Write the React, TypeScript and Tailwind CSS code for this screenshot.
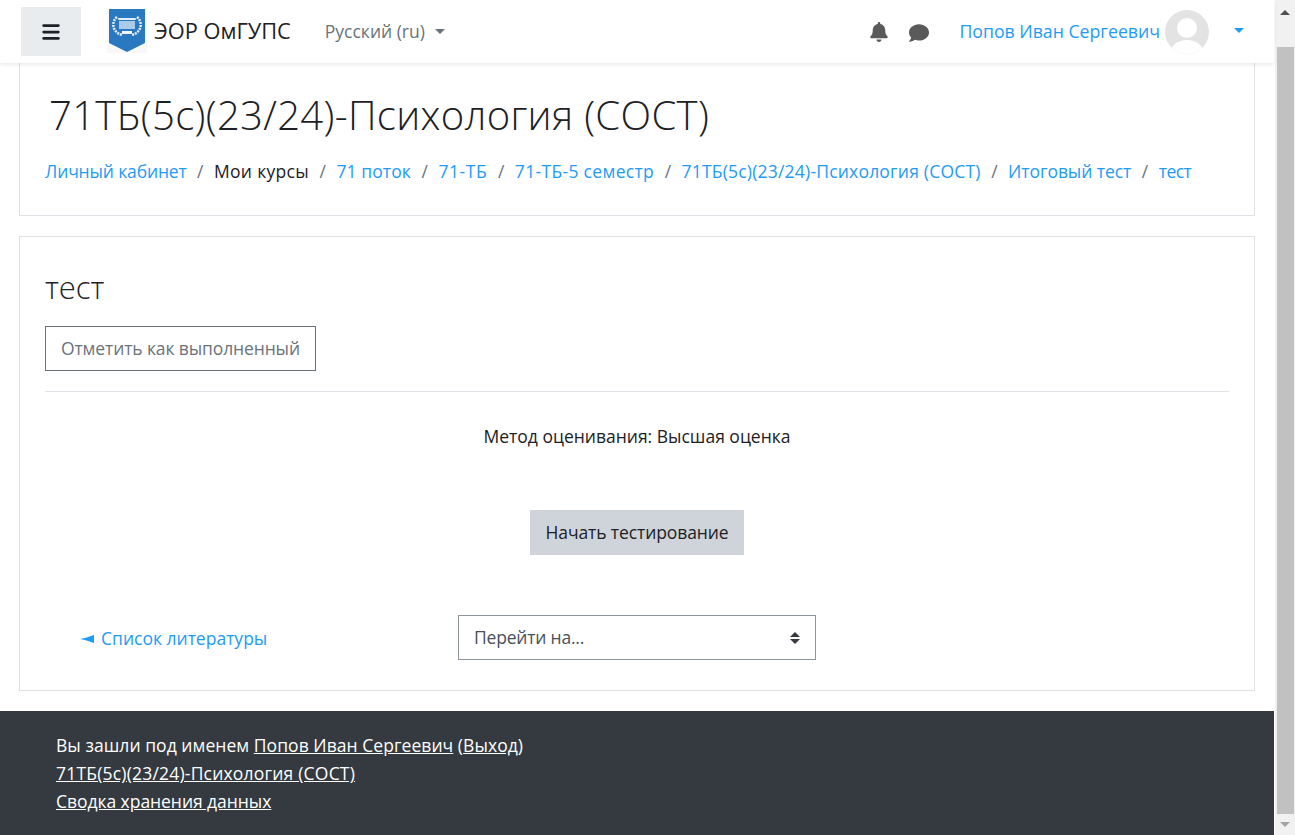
import { FaBell, FaComment } from "react-icons/fa"
import { Menu } from "lucide-react"

const font = "font-['Open_Sans','Noto_Sans',sans-serif]"

const crumbs = [
  { text: "Личный кабинет", link: true, cls: "tracking-[-0.15px]" },
  { text: "Мои курсы", link: false, cls: "tracking-[0.3px]" },
  { text: "71 поток", link: true, cls: "tracking-[0.1px]" },
  { text: "71-ТБ", link: true, cls: "tracking-[0.6px]" },
  { text: "71-ТБ-5 семестр", link: true, cls: "tracking-[0.33px]" },
  { text: "71ТБ(5с)(23/24)-Психология (СОСТ)", link: true, cls: "tracking-[0.2px]" },
  { text: "Итоговый тест", link: true, cls: "tracking-[-0.06px]" },
  { text: "тест", link: true, cls: "tracking-[-0.5px]" },
]

function Logo() {
  return (
    <svg width="40" height="44" viewBox="0 0 40 44" className="shrink-0 mb-[2px]">
      <rect width="40" height="44" fill="#f8f8f8" />
      <path d="M2 0H38V34L20 43L2 34Z" fill="#2a78bf" />
      <path d="M10 8C4 13 5 23 15 26" fill="none" stroke="#e4eef7" strokeWidth="2.5" strokeDasharray="2 1" />
      <path d="M30 8C36 13 35 23 25 26" fill="none" stroke="#e4eef7" strokeWidth="2.5" strokeDasharray="2 1" />
      <rect x="11" y="9" width="18" height="2" rx="1" fill="#e4eef7" />
      <rect x="12" y="12" width="16" height="8" fill="#a9cbe9" />
      <rect x="15" y="22" width="10" height="3" fill="#eef5fb" />
    </svg>
  )
}

function Avatar() {
  return (
    <svg width="44" height="44" viewBox="0 0 44 44" className="shrink-0">
      <defs>
        <clipPath id="av">
          <circle cx="22" cy="22" r="22" />
        </clipPath>
      </defs>
      <g clipPath="url(#av)">
        <rect width="44" height="44" fill="#e3e3e3" />
        <circle cx="22" cy="18" r="10" fill="#fff" />
        <ellipse cx="22" cy="44" rx="17" ry="14" fill="#fff" />
      </g>
    </svg>
  )
}

function Scrollbar() {
  return (
    <div className="w-5 shrink-0 h-[835px] bg-[#f1f1f1] flex flex-col items-center">
      <div className="h-[20px] w-full flex items-center justify-center pt-1">
        <div className="w-0 h-0 border-x-[5px] border-x-transparent border-b-[5px] border-b-[#505050]" />
      </div>
      <div className="mt-[27px] w-[17px] h-[767px] bg-[#c1c1c1]" />
      <div className="flex-1 w-full flex items-center justify-center">
        <div className="w-0 h-0 border-x-[5px] border-x-transparent border-t-[5px] border-t-[#a3a3a3]" />
      </div>
    </div>
  )
}

export default function App() {
  return (
    <div className={`flex h-[835px] overflow-hidden bg-white text-[#1d2125] text-[17.5px] ${font}`}>
      <div className="flex-1 min-w-0 flex flex-col mr-px">
        <header className="relative z-10 h-[63px] shrink-0 bg-white shadow-[0_2px_4px_rgba(0,0,0,0.08)] flex items-center pl-[21px]">
          <button className="w-[60px] h-[49px] bg-[#e9ecef] flex items-center justify-center">
            <Menu size={22} strokeWidth={3} color="#1d2125" />
          </button>
          <div className="ml-[26px] flex items-center">
            <Logo />
            <span className="ml-[7px] text-[21.8px] text-[#1d2125]">ЭОР ОмГУПС</span>
          </div>
          <div className="ml-[34px] flex items-center text-[#6a737b]">
            <span>Русский ‎(ru)‎</span>
            <div className="ml-[10px] w-0 h-0 border-x-[5px] border-x-transparent border-t-[5px] border-t-[#6a737b]" />
          </div>
          <div className="ml-auto flex items-center pr-[30px]">
            <FaBell size={20} color="#5a5a5a" />
            <FaComment size={20} color="#5a5a5a" className="ml-[20px] mt-[2px]" />
            <span className="ml-[30px] text-[#1e9bf5] text-[17.7px]">Попов Иван Сергеевич</span>
            <div className="ml-[5px]">
              <Avatar />
            </div>
            <div className="ml-[25px] mb-[3px] w-0 h-0 border-x-[5px] border-x-transparent border-t-[5px] border-t-[#1e9bf5]" />
          </div>
        </header>

        <main className="flex-1 px-[19px] flex flex-col">
          <section className="border border-t-0 border-[#dee2e6] h-[153px] px-[25px] flex flex-col">
            <h1 className="mt-[27px] ml-[4px] text-[40px] tracking-[0.33px] font-light leading-[50px]">71ТБ(5с)(23/24)-Психология (СОСТ)</h1>
            <nav className="mt-[18px] flex items-center">
              {crumbs.map((c, i) => (
                <span key={c.text} className="flex items-center">
                  {i > 0 && <span className="mx-[10.5px] text-[#6a737b]">/</span>}
                  <span className={`${c.cls} ${c.link ? "text-[#1e9bf5]" : "text-[#1d2125]"}`}>{c.text}</span>
                </span>
              ))}
            </nav>
          </section>

          <section className="mt-[20px] border border-[#dee2e6] h-[455px] px-[25px] flex flex-col">
            <h2 className="mt-[30px] text-[31px] font-light leading-[40px]">тест</h2>
            <button className="mt-[19px] self-start h-[45px] px-[15px] border border-[#6a737b] text-[#6a737b] tracking-[-0.12px]">Отметить как выполненный</button>
            <div className="mt-[20px] border-t border-[#dee2e6]" />
            <p className="mt-[32px] text-center leading-[24px]">Метод оценивания: Высшая оценка</p>
            <button className="mt-[62px] self-center h-[45px] w-[214px] bg-[#ced4da] tracking-[-0.1px]">Начать тестирование</button>
            <div className="mt-[60px] flex items-center">
              <span className="ml-[35px] w-[378px] flex items-center text-[#1e9bf5] mt-[2px]">
                <svg width="14" height="8" viewBox="0 0 14 8" className="shrink-0">
                  <path d="M0 4L5 3L14 0V8L5 5Z" fill="#1e9bf5" />
                </svg>
                <span className="ml-[7px]">Список литературы</span>
              </span>
              <div className="w-[358px] h-[45px] border border-[#8f959e] pl-[15px] pr-[15px] flex items-center justify-between text-[#495057] tracking-[-0.2px]">
                <span>Перейти на...</span>
                <span className="flex flex-col gap-[2px]">
                  <span className="w-0 h-0 border-x-[5px] border-x-transparent border-b-[5px] border-b-[#343a40]" />
                  <span className="w-0 h-0 border-x-[5px] border-x-transparent border-t-[5px] border-t-[#343a40]" />
                </span>
              </div>
            </div>
          </section>

          <div className="h-[20px] shrink-0" />
        </main>

        <footer className="h-[124px] shrink-0 bg-[#343a40] text-white pl-[56px] pt-[20px] leading-[28px]">
          <div className="tracking-[0.05px]">
            Вы зашли под именем <a className="underline">Попов Иван Сергеевич</a> (<a className="underline">Выход</a>)
          </div>
          <div>
            <a className="underline tracking-[0.2px]">71ТБ(5с)(23/24)-Психология (СОСТ)</a>
          </div>
          <div>
            <a className="underline tracking-[-0.05px]">Сводка хранения данных</a>
          </div>
        </footer>
      </div>
      <Scrollbar />
    </div>
  )
}
